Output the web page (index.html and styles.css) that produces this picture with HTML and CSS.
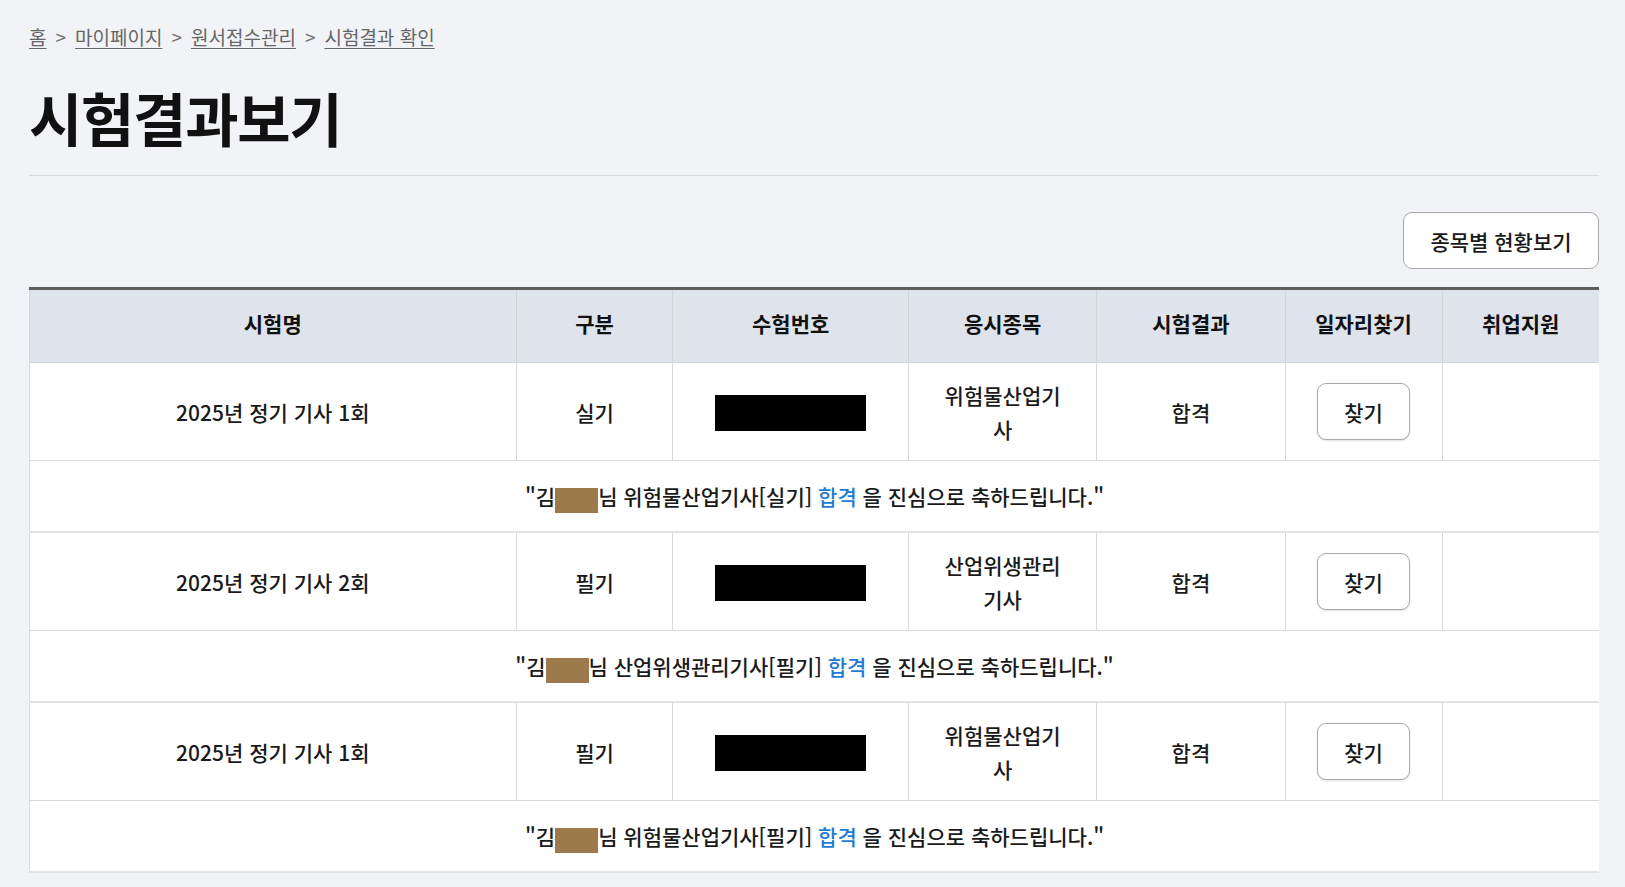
FILE: index.html
```html
<!DOCTYPE html>
<html lang="ko">
<head>
    <meta charset="UTF-8">
    <meta name="viewport" content="width=device-width, initial-scale=1.0">
    <title>시험결과보기</title>
    <link rel="stylesheet" href="styles.css">
</head>
<body>
    <div class="page">
        <nav class="breadcrumb"><a href="#">홈</a><span class="sep">&gt;</span><a href="#">마이페이지</a><span class="sep">&gt;</span><a href="#">원서접수관리</a><span class="sep">&gt;</span><a href="#">시험결과 확인</a></nav>

        <h1 class="page-title">시험결과보기</h1>

        <div class="toolbar">
            <button type="button" class="btn-status">종목별 현황보기</button>
        </div>

        <table class="result-table">
            <colgroup>
                <col style="width: 31%">
                <col style="width: 10%">
                <col style="width: 15%">
                <col style="width: 12%">
                <col style="width: 12%">
                <col style="width: 10%">
                <col style="width: 10%">
            </colgroup>
            <thead>
                <tr>
                    <th>시험명</th>
                    <th>구분</th>
                    <th>수험번호</th>
                    <th>응시종목</th>
                    <th>시험결과</th>
                    <th>일자리찾기</th>
                    <th>취업지원</th>
                </tr>
            </thead>
            <tbody>
                <tr class="data-row">
                    <td>2025년 정기 기사 1회</td>
                    <td>실기</td>
                    <td><span class="masked"></span></td>
                    <td class="subject">위험물산업기사</td>
                    <td>합격</td>
                    <td><button type="button" class="btn-find">찾기</button></td>
                    <td></td>
                </tr>
                <tr class="msg-row">
                    <td colspan="7">"김<span class="hidden-name"></span>님 위험물산업기사[실기] <em class="pass">합격</em> 을 진심으로 축하드립니다."</td>
                </tr>
                <tr class="data-row">
                    <td>2025년 정기 기사 2회</td>
                    <td>필기</td>
                    <td><span class="masked"></span></td>
                    <td class="subject">산업위생관리기사</td>
                    <td>합격</td>
                    <td><button type="button" class="btn-find">찾기</button></td>
                    <td></td>
                </tr>
                <tr class="msg-row">
                    <td colspan="7">"김<span class="hidden-name"></span>님 산업위생관리기사[필기] <em class="pass">합격</em> 을 진심으로 축하드립니다."</td>
                </tr>
                <tr class="data-row">
                    <td>2025년 정기 기사 1회</td>
                    <td>필기</td>
                    <td><span class="masked"></span></td>
                    <td class="subject">위험물산업기사</td>
                    <td>합격</td>
                    <td><button type="button" class="btn-find">찾기</button></td>
                    <td></td>
                </tr>
                <tr class="msg-row">
                    <td colspan="7">"김<span class="hidden-name"></span>님 위험물산업기사[필기] <em class="pass">합격</em> 을 진심으로 축하드립니다."</td>
                </tr>
            </tbody>
        </table>
    </div>
</body>
</html>
```

FILE: styles.css
```css
body {
    margin: 0;
    padding: 0;
    background-color: #f2f3f7;
    font-family: "Noto Sans CJK KR", "Noto Sans", sans-serif;
    color: #1a1a1a;
}
.page {
    padding: 0 26px 15px 29px;
}
.breadcrumb {
    padding-top: 24px;
    line-height: 26px;
    font-size: 19px;
    color: #666;
}
.breadcrumb a {
    color: #666;
    text-decoration: underline;
    text-underline-offset: 3px;
}
.breadcrumb .sep {
    margin: 0 9px;
    color: #777;
}
.page-title {
    margin: 27px 0 0;
    padding-bottom: 18px;
    border-bottom: 1px solid #d8d9dd;
    font-size: 58px;
    line-height: 80px;
    font-weight: 700;
    letter-spacing: -1.3px;
    color: #111;
}
.toolbar {
    display: flex;
    justify-content: flex-end;
    margin-top: 36px;
}
.btn-status {
    width: 196px;
    height: 57px;
    background-color: #fff;
    border: 1.5px solid #a9a9a9;
    border-radius: 9px;
    font-family: inherit;
    font-size: 21px;
    font-weight: 500;
    color: #1a1a1a;
    cursor: pointer;
}
.result-table {
    width: 100%;
    margin-top: 18px;
    border-collapse: collapse;
    table-layout: fixed;
    border-top: 3px solid #5e5e5e;
    font-size: 21px;
}
.result-table th {
    height: 66px;
    padding: 0 0 6px;
    background-color: #dfe3ec;
    border: 1px solid #d2d4d8;
    border-top: none;
    font-weight: 700;
    color: #111;
}
.result-table td {
    padding: 0 28px;
    background-color: #fff;
    border: 1px solid #d9d9d9;
    text-align: center;
    font-weight: 500;
    color: #1a1a1a;
    line-height: 34px;
}
.result-table th:first-child,
.result-table td:first-child {
    border-left: 1px solid #d9d9d9;
}
.result-table th:last-child,
.result-table td:last-child {
    border-right: none;
}
.data-row td {
    height: 97px;
}
.msg-row td {
    height: 70px;
    border-bottom: 2px solid #e2e2e2;
}
.masked {
    display: inline-block;
    width: 151px;
    height: 36px;
    background-color: #000;
    vertical-align: middle;
}
.hidden-name {
    display: inline-block;
    width: 43px;
    height: 25px;
    background-color: #9c7a4b;
    vertical-align: -8px;
}
.pass {
    font-style: normal;
    color: #1f7bd4;
}
.btn-find {
    width: 93px;
    height: 57px;
    background-color: #fff;
    border: 1.5px solid #a9a9a9;
    border-radius: 9px;
    box-shadow: 0 1px 2px rgba(0, 0, 0, 0.12);
    font-family: inherit;
    font-size: 21px;
    font-weight: 500;
    color: #1a1a1a;
    cursor: pointer;
    vertical-align: middle;
}
```
